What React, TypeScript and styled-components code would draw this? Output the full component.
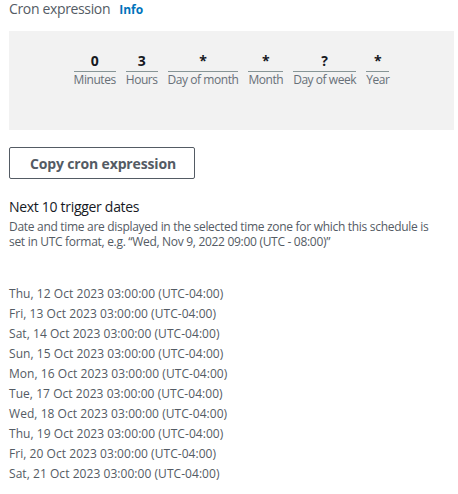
import React from "react";
import styled, { createGlobalStyle } from "styled-components";

const Global = createGlobalStyle`
  html, body { margin: 0; padding: 0; background: #ffffff; }
  body { font-family: "Open Sans", "Noto Sans", Arial, sans-serif; }
`;

const Page = styled.div`
  padding: 0 4px 0 9px;
  width: 445px;
  display: flex;
  flex-direction: column;
`;

const Header = styled.div`
  display: flex;
  align-items: baseline;
  gap: 9px;
  height: 19px;
  margin-top: -1px;
`;

const Title = styled.span`
  font-size: 14px;
  color: #545b64;
  letter-spacing: -0.35px;
`;

const InfoLink = styled.a`
  font-size: 12px;
  font-weight: 700;
  color: #0073bb;
  text-decoration: none;
`;

const ExprBox = styled.div`
  margin-top: 13px;
  height: 99px;
  background: #f2f2f2;
  display: flex;
  justify-content: center;
  align-items: flex-start;
  gap: 10px;
  padding-top: 21px;
  box-sizing: border-box;
`;

const Field = styled.div`
  display: flex;
  flex-direction: column;
  align-items: stretch;
`;

const Value = styled.div`
  font-size: 14px;
  font-weight: 700;
  color: #16191f;
  text-align: center;
  line-height: 18px;
  border-bottom: 1px solid #879596;
  padding-bottom: 1px;
`;

const Label = styled.div`
  font-size: 12px;
  color: #687078;
  line-height: 16px;
  white-space: nowrap;
  letter-spacing: -0.45px;
`;

const CopyButton = styled.button`
  margin-top: 17px;
  align-self: flex-start;
  width: 186px;
  height: 32px;
  background: #ffffff;
  border: 1px solid #545b64;
  border-radius: 2px;
  font-family: inherit;
  font-size: 14px;
  font-weight: 700;
  color: #545b64;
  padding: 0 0 0 2px;
  letter-spacing: -0.15px;
`;

const SectionTitle = styled.div`
  margin-top: 19px;
  font-size: 14px;
  color: #16191f;
  line-height: 18px;
  letter-spacing: -0.3px;
`;

const Description = styled.div`
  margin-top: 3px;
  max-width: 434px;
  font-size: 12px;
  color: #545b64;
  line-height: 15px;
  letter-spacing: -0.3px;
`;

const DateList = styled.ul`
  list-style: none;
  margin: 35px 0 0 0;
  padding: 0;
  display: flex;
  flex-direction: column;
`;

const DateItem = styled.li`
  font-size: 12px;
  color: #545b64;
  line-height: 20px;
  letter-spacing: 0.05px;
`;

const fields = [
  { v: "0", l: "Minutes" },
  { v: "3", l: "Hours" },
  { v: "*", l: "Day of month" },
  { v: "*", l: "Month" },
  { v: "?", l: "Day of week" },
  { v: "*", l: "Year" },
];

const dates = [
  "Thu, 12 Oct 2023 03:00:00 (UTC-04:00)",
  "Fri, 13 Oct 2023 03:00:00 (UTC-04:00)",
  "Sat, 14 Oct 2023 03:00:00 (UTC-04:00)",
  "Sun, 15 Oct 2023 03:00:00 (UTC-04:00)",
  "Mon, 16 Oct 2023 03:00:00 (UTC-04:00)",
  "Tue, 17 Oct 2023 03:00:00 (UTC-04:00)",
  "Wed, 18 Oct 2023 03:00:00 (UTC-04:00)",
  "Thu, 19 Oct 2023 03:00:00 (UTC-04:00)",
  "Fri, 20 Oct 2023 03:00:00 (UTC-04:00)",
  "Sat, 21 Oct 2023 03:00:00 (UTC-04:00)",
];

export default function App() {
  return (
    <>
      <Global />
      <Page>
        <Header>
          <Title>Cron expression</Title>
          <InfoLink href="#">Info</InfoLink>
        </Header>
        <ExprBox>
          {fields.map((f) => (
            <Field key={f.l}>
              <Value>{f.v}</Value>
              <Label>{f.l}</Label>
            </Field>
          ))}
        </ExprBox>
        <CopyButton>Copy cron expression</CopyButton>
        <SectionTitle>Next 10 trigger dates</SectionTitle>
        <Description>
          Date and time are displayed in the selected time zone for which this schedule is
          set in UTC format, e.g. “Wed, Nov 9, 2022 09:00 (UTC - 08:00)”
        </Description>
        <DateList>
          {dates.map((d) => (
            <DateItem key={d}>{d}</DateItem>
          ))}
        </DateList>
      </Page>
    </>
  );
}
